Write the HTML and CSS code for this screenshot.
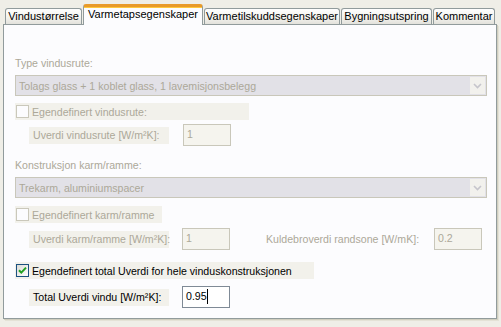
FILE: index.html
```html
<!DOCTYPE html>
<html>
<head>
<meta charset="utf-8">
<link rel="stylesheet" href="styles.css">
</head>
<body>
<div class="window">
  <div class="tabs">
    <div class="tab t1">Vindustørrelse</div>
    <div class="tab active t2">Varmetapsegenskaper</div>
    <div class="tab t3">Varmetilskuddsegenskaper</div>
    <div class="tab t4">Bygningsutspring</div>
    <div class="tab t5">Kommentar</div>
  </div>
  <div class="panel">
    <div class="caption cap1">Type vindusrute:</div>
    <div class="combo dd1">
      <span class="combo-text">Tolags glass + 1 koblet glass, 1 lavemisjonsbelegg</span>
      <span class="combo-btn"><svg width="9" height="6" viewBox="0 0 9 6"><path d="M1 1 L4.5 4.5 L8 1" fill="none" stroke="#c6c5cc" stroke-width="1.6"/></svg></span>
    </div>
    <div class="check cb1"><span class="box"></span><span class="disabled">Egendefinert vindusrute:</span></div>
    <div class="row r1">
      <span class="label disabled">Uverdi vindusrute [W/m²K]:</span>
      <span class="field off">1</span>
    </div>
    <div class="caption cap2">Konstruksjon karm/ramme:</div>
    <div class="combo dd2">
      <span class="combo-text">Trekarm, aluminiumspacer</span>
      <span class="combo-btn"><svg width="9" height="6" viewBox="0 0 9 6"><path d="M1 1 L4.5 4.5 L8 1" fill="none" stroke="#c6c5cc" stroke-width="1.6"/></svg></span>
    </div>
    <div class="check cb2"><span class="box"></span><span class="disabled">Egendefinert karm/ramme</span></div>
    <div class="row r2">
      <span class="label disabled">Uverdi karm/ramme [W/m²K]:</span>
      <span class="field off f2">1</span>
      <span class="label2 disabled">Kuldebroverdi randsone [W/mK]:</span>
      <span class="field off">0.2</span>
    </div>
    <div class="check cb3"><span class="box on"><svg width="11" height="11" viewBox="0 0 11 11"><path d="M2 5.2 L4.3 7.6 L9 2.6" fill="none" stroke="#21a121" stroke-width="2"/></svg></span><span>Egendefinert total Uverdi for hele vinduskonstruksjonen</span></div>
    <div class="row r3">
      <span class="label">Total Uverdi vindu [W/m²K]:</span>
      <span class="field on f2">0.95<span class="caret"></span></span>
    </div>
  </div>
</div>
</body>
</html>
```

FILE: styles.css
```css
html, body {
  margin: 0;
  padding: 0;
}
body {
  width: 501px;
  height: 327px;
  background: #efeee7;
  font-family: "Liberation Sans", Arial, sans-serif;
  font-size: 10.6px;
  color: #000;
  overflow: hidden;
  white-space: nowrap;
}
.window {
  padding-left: 3px;
  width: 494px;
}
.tabs {
  display: flex;
  align-items: flex-end;
  height: 24px;
  padding-left: 2px;
}
.tab {
  box-sizing: border-box;
  height: 16px;
  border: 1px solid #919b9c;
  border-bottom: none;
  border-radius: 3px 3px 0 0;
  background: linear-gradient(#fefefe, #f4f3ee 55%, #e3e2dc);
  text-align: center;
  line-height: 15px;
  font-size: 11px;
  margin-right: 1px;
}
.tab.active {
  height: 21px;
  margin-bottom: -1px;
  position: relative;
  z-index: 1;
  background: #fcfcfe;
  border-top: 3px solid #e89a2a;
  box-shadow: inset 0 1px 0 #ffc83c;
  line-height: 15px;
}
.t1 { width: 77px; }
.t2 { width: 120px; }
.t3 { width: 136px; }
.t4 { width: 91px; }
.t5 { width: 62px; }
.panel {
  box-sizing: border-box;
  width: 494px;
  height: 295px;
  border: 1px solid #919b9c;
  background: #fcfcfe;
  box-shadow: 1px 1px 0 #d0cebf, 2px 2px 0 #e4e2d6;
  padding-left: 11px;
  display: flex;
  flex-direction: column;
  align-items: flex-start;
}
.disabled, .caption, .combo-text, .field.off {
  color: #aca899;
}
.caption {
  height: 13px;
  line-height: 13px;
}
.cap1 { margin-top: 32px; }
.cap2 { margin-top: 13px; }
.combo {
  box-sizing: border-box;
  width: 472px;
  height: 21px;
  border: 1px solid #c9c7ba;
  background: #e2e1e7;
  display: flex;
  align-items: center;
  justify-content: space-between;
}
.dd1 { margin-top: 5px; }
.dd2 { margin-top: 5px; }
.combo-text {
  padding-left: 3px;
  padding-top: 1px;
}
.combo-btn {
  box-sizing: border-box;
  width: 15px;
  height: 17px;
  margin-right: 1px;
  background: #f2f1ed;
  display: flex;
  align-items: center;
  justify-content: center;
}
.check {
  box-sizing: border-box;
  height: 17px;
  background: #f2f1eb;
  display: flex;
  align-items: center;
  padding-left: 1px;
}
.cb1 { width: 234px; margin-top: 7px; }
.cb2 { width: 147px; margin-top: 8px; }
.cb3 { width: 299px; margin-top: 12px; }
.box {
  box-sizing: border-box;
  width: 13px;
  height: 13px;
  border: 1px solid #cac8bb;
  background: #fcfcfe;
  margin-right: 3px;
  display: flex;
}
.box.on {
  border-color: #1c5180;
  background: linear-gradient(135deg, #dcdcd7, #fefefe);
}
.row {
  height: 22px;
  display: flex;
  align-items: center;
  margin-left: 14px;
}
.r1 { margin-top: 4px; }
.r2 { margin-top: 5px; }
.r3 { margin-top: 7px; }
.label {
  box-sizing: border-box;
  width: 140px;
  height: 17px;
  line-height: 17px;
  padding-left: 4px;
  background: #f2f1eb;
  margin-right: 14px;
}
.label2 {
  margin-left: 32px;
  width: 172px;
  padding-left: 4px;
  box-sizing: border-box;
  height: 17px;
  line-height: 17px;
}
.field {
  box-sizing: border-box;
  width: 48px;
  height: 22px;
  padding: 2px 3px;
  line-height: 14px;
  display: flex;
  align-items: flex-start;
}
.field.off {
  background: #f5f4ee;
  border: 1px solid #c9c7ba;
}
.field.on {
  background: #fff;
  border: 1px solid #7f8a96;
  color: #000;
}
.f2 { margin-left: -1px; }
.caret {
  display: inline-block;
  width: 1px;
  height: 15px;
  background: #000;
}
```
